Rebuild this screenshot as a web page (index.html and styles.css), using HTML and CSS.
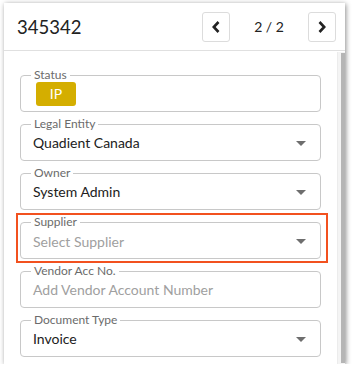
FILE: index.html
```html
<!DOCTYPE html>
<html lang="en">
<head>
  <meta charset="UTF-8">
  <title>Document 345342</title>
  <link rel="stylesheet" href="styles.css">
</head>
<body>

  <div class="panel">
    <div class="panel-header">
      <h1 class="doc-id">345342</h1>
      <div class="pager">
        <button class="pager-btn" type="button" aria-label="Previous">
          <svg width="10" height="14" viewBox="0 0 10 14"><path d="M7.5 2 L2.8 7 L7.5 12" fill="none" stroke="#222" stroke-width="2.6" stroke-linejoin="miter"/></svg>
        </button>
        <span class="pager-count">2 / 2</span>
        <button class="pager-btn" type="button" aria-label="Next">
          <svg width="10" height="14" viewBox="0 0 10 14"><path d="M2.5 2 L7.2 7 L2.5 12" fill="none" stroke="#222" stroke-width="2.6" stroke-linejoin="miter"/></svg>
        </button>
      </div>
    </div>

    <div class="panel-body">
      <div class="fields">
        <fieldset class="field">
          <legend>Status</legend>
          <span class="badge">IP</span>
        </fieldset>

        <fieldset class="field select">
          <legend>Legal Entity</legend>
          <span class="value">Quadient Canada</span>
          <span class="caret"></span>
        </fieldset>

        <fieldset class="field select">
          <legend>Owner</legend>
          <span class="value">System Admin</span>
          <span class="caret"></span>
        </fieldset>

        <div class="highlight">
          <fieldset class="field select">
            <legend>Supplier</legend>
            <span class="value placeholder">Select Supplier</span>
            <span class="caret"></span>
          </fieldset>
        </div>

        <fieldset class="field">
          <legend>Vendor Acc No.</legend>
          <span class="value placeholder">Add Vendor Account Number</span>
        </fieldset>

        <fieldset class="field select">
          <legend>Document Type</legend>
          <span class="value">Invoice</span>
          <span class="caret"></span>
        </fieldset>
      </div>

      <div class="scrollbar"><div class="scroll-thumb"></div></div>
    </div>
  </div>

</body>
</html>
```

FILE: styles.css
```css
body {
  margin: 0;
  font-family: Lato, "Liberation Sans", sans-serif;
  background: #fff;
  color: #212121;
}

.panel {
  width: 341px;
  height: 361px;
  margin: 3px 0 0 4px;
  background: #fff;
  box-shadow: 1px 1px 5px rgba(0,0,0,0.45);
  display: flex;
  flex-direction: column;
  overflow: hidden;
}

.panel-header {
  height: 47px;
  flex: none;
  display: flex;
  align-items: center;
  justify-content: space-between;
  padding: 0 9px 0 13px;
  border-bottom: 1px solid #e0e0e0;
}

.doc-id {
  margin: 0;
  font-size: 18.5px;
  font-weight: 400;
  color: #222;
}

.pager {
  display: flex;
  align-items: center;
}

.pager-btn {
  width: 28px;
  height: 30px;
  padding: 0;
  border: 1px solid #dcdcdc;
  border-radius: 3px;
  background: #fff;
  display: flex;
  align-items: center;
  justify-content: center;
}

.pager-count {
  width: 78px;
  text-align: center;
  font-size: 14px;
  color: #222;
}

.panel-body {
  flex: 1;
  display: flex;
  padding-top: 1px;
}

.fields {
  width: 301px;
  padding: 16px 0 0 16px;
  display: flex;
  flex-direction: column;
  gap: 5px;
}

.field {
  margin: 0;
  min-width: 0;
  height: 44px;
  box-sizing: border-box;
  padding: 0 12px 4px;
  border: 1px solid #c8c8c8;
  border-radius: 4px;
  display: flex;
  align-items: center;
}

.field legend {
  margin-left: -2px;
  padding: 0 3px;
  font-size: 12px;
  line-height: 14px;
  color: #6b6b6b;
}

.value {
  flex: 1;
  font-size: 14px;
  line-height: 24px;
  color: #212121;
  white-space: nowrap;
}

.value.placeholder {
  color: #a0a0a0;
}

.caret {
  width: 0;
  height: 0;
  margin-right: 2px;
  border-left: 5px solid transparent;
  border-right: 5px solid transparent;
  border-top: 5px solid #6e6e6e;
}

.badge {
  display: inline-block;
  width: 40px;
  height: 24px;
  line-height: 24px;
  margin-left: 3px;
  border-radius: 3px;
  background: #d4ae00;
  color: #fff;
  font-size: 14px;
  text-align: center;
}

.highlight {
  position: relative;
}

.highlight::after {
  content: "";
  position: absolute;
  top: -2px;
  left: -4px;
  right: -7px;
  bottom: -4px;
  border: 2px solid #f2511f;
  pointer-events: none;
}

.scrollbar {
  margin-left: auto;
  width: 7px;
  border-left: 1px solid #ececec;
  background: #f4f4f4;
  display: flex;
  justify-content: flex-end;
}

.scroll-thumb {
  width: 4px;
  margin-top: 1px;
  height: 310px;
  background: #b5b5b5;
}
```
